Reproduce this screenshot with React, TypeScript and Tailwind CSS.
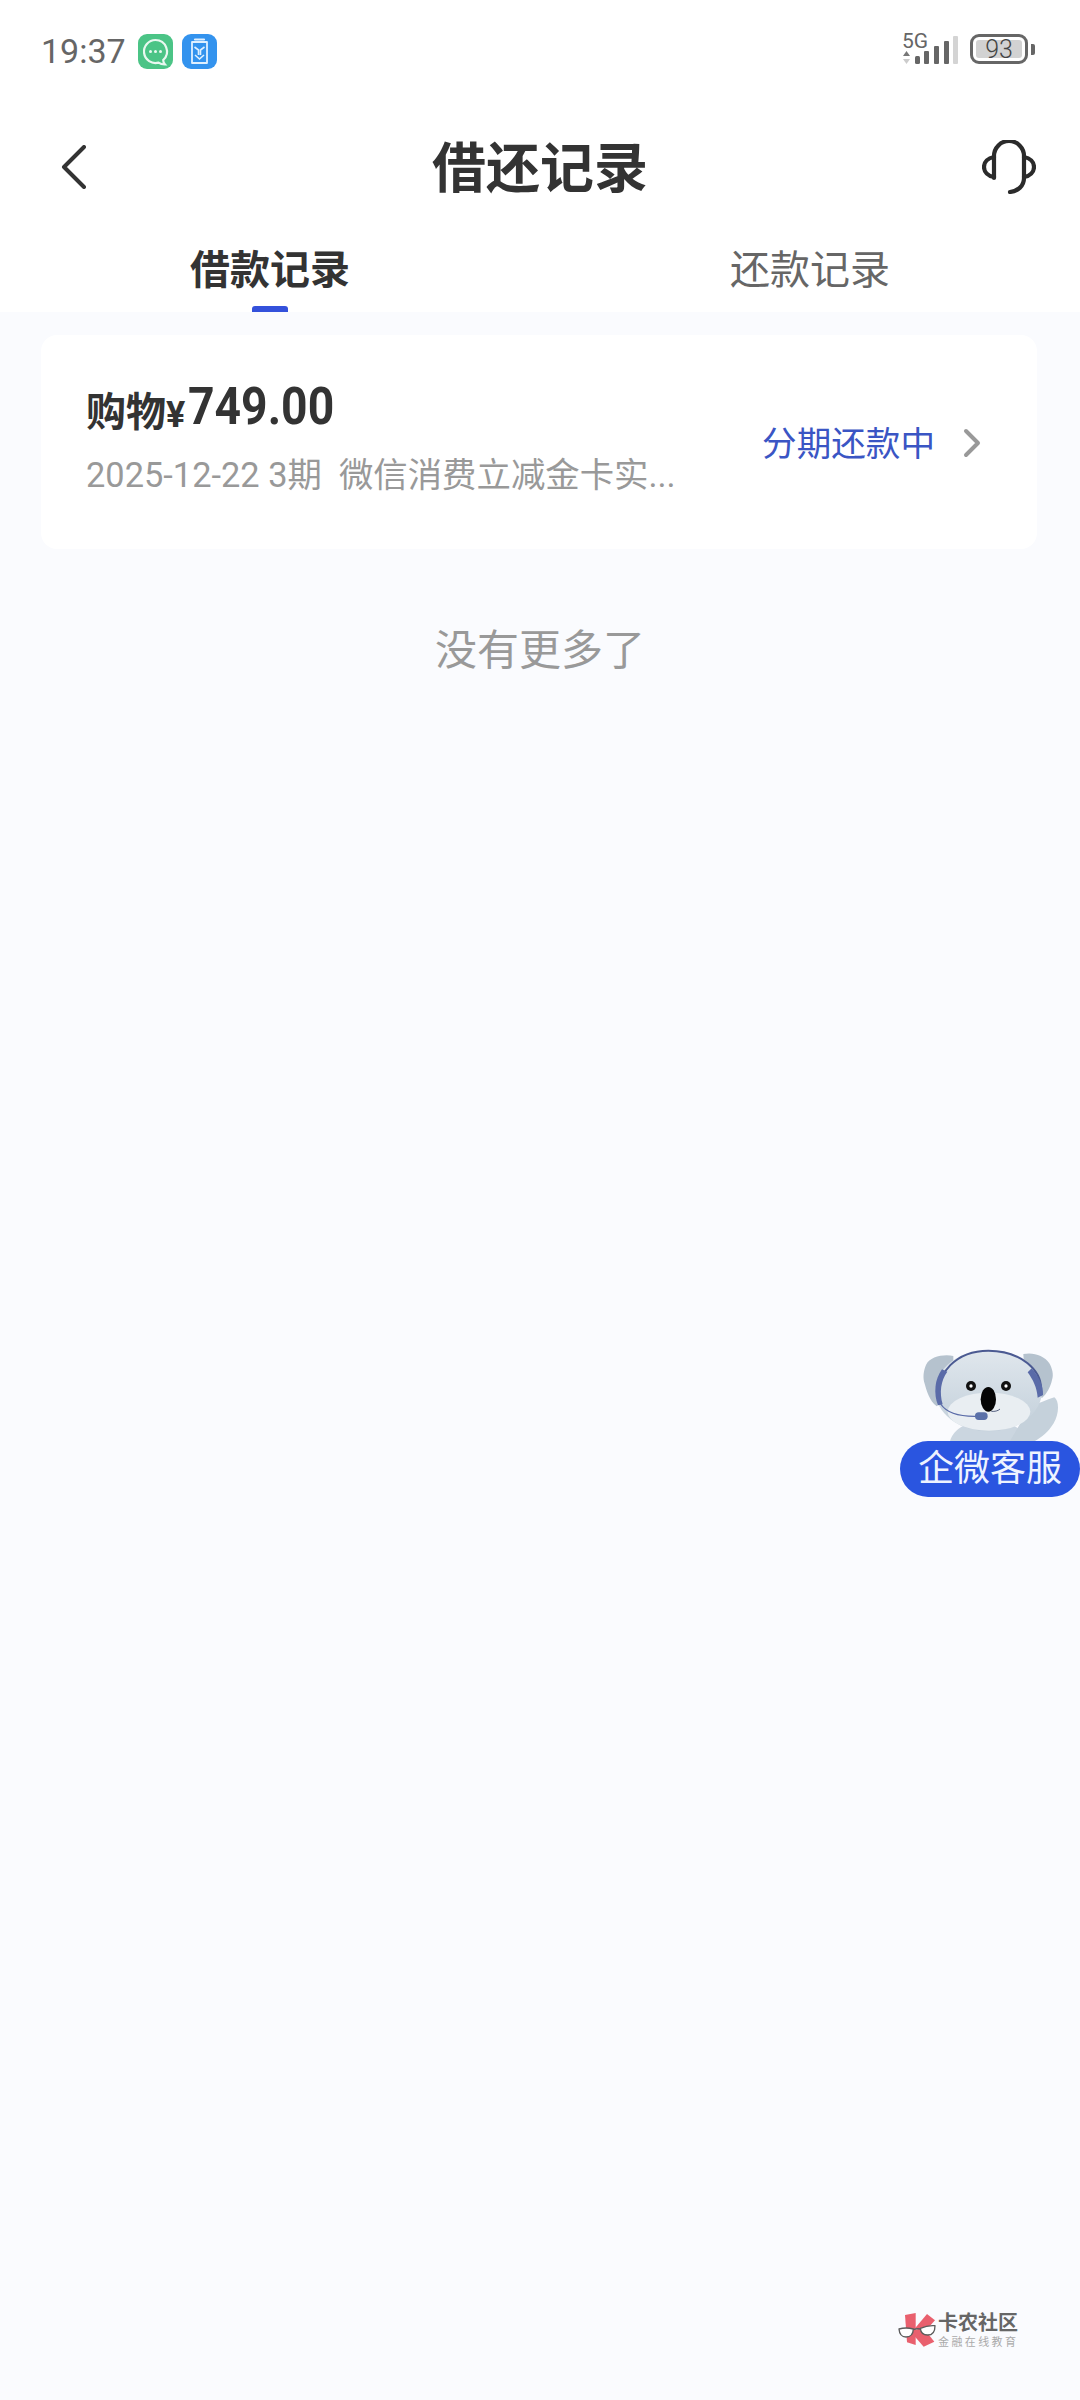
const CJK = "font-['Roboto','Noto_Sans_CJK_SC',sans-serif]";

function ChatBadge() {
  return (
    <svg width="35" height="35" viewBox="0 0 35 35">
      <rect width="35" height="35" rx="9" fill="#4bc486" />
      <path d="M17.500 6a11.500 11.500 0 1 0 3 22.600c2 1.400 4 2 6.500 1.900-1.200-1.300-1.800-2.600-1.800-4.500A11.500 11.500 0 0 0 17.500 6Z" fill="none" stroke="#e9f8f0" strokeWidth="2.200" />
      <circle cx="12.500" cy="17.500" r="1.500" fill="#e9f8f0" />
      <circle cx="17.500" cy="17.500" r="1.500" fill="#e9f8f0" />
      <circle cx="22.500" cy="17.500" r="1.500" fill="#e9f8f0" />
    </svg>
  );
}

function ClipBadge() {
  return (
    <svg width="35" height="35" viewBox="0 0 35 35">
      <rect width="35" height="35" rx="9" fill="#3393ee" />
      <path d="M10 8h15v21H10Z" fill="none" stroke="#dff0ff" strokeWidth="1.800" strokeLinejoin="round" />
      <path d="M13 5.500h9" stroke="#dff0ff" strokeWidth="2.200" strokeLinecap="round" />
      <path d="M12.500 13l4 3v5M22.500 13l-4 3v5M13 21l4.500 4 4.500-4" fill="none" stroke="#dff0ff" strokeWidth="1.600" />
    </svg>
  );
}

function Signal() {
  return (
    <div className="flex items-end">
      {/* 5G label sits over the short bars, so the column is narrower than its text */}
      <div className="flex w-[13px] flex-col items-start">
        <span className="font-['Roboto',sans-serif] text-[21px] leading-[17px] text-[#666666]">5G</span>
        <svg width="7" height="13" viewBox="0 0 7 13" className="ml-[1px] mt-[1px]">
          <path d="M3.500 0l3.500 5H0Z" fill="#777777" />
          <path d="M3.500 13l3.500-5H0Z" fill="#cccccc" />
        </svg>
      </div>
      <svg width="43" height="28" viewBox="0 0 43 28">
        <rect x="0" y="20" width="5" height="8" rx="1.500" fill="#666666" />
        <rect x="9" y="15" width="5" height="13" rx="1" fill="#666666" />
        <rect x="19" y="10" width="5" height="18" rx="1" fill="#666666" />
        <rect x="29" y="5" width="5" height="23" rx="1" fill="#666666" />
        <rect x="38" y="0" width="5" height="28" rx="1" fill="#d4d4d4" />
      </svg>
    </div>
  );
}

function Battery() {
  return (
    <div className="flex items-center gap-[3px]">
      <div className="flex h-[30px] w-[58px] items-center rounded-[9px] border-[3px] border-[#666666] p-[3px]">
        <div className="flex h-full w-full items-center justify-center rounded-[3px] bg-[#d2d2d2] font-['Roboto',sans-serif] text-[25px] font-light leading-none text-[#444444]">
          93
        </div>
      </div>
      <div className="h-[11px] w-[4px] rounded-r-[2px] bg-[#666666]" />
    </div>
  );
}

function Headset() {
  return (
    <svg width="54" height="54" viewBox="0 0 54 54" fill="none" stroke="#2b2b2b" strokeWidth="4.200" strokeLinecap="round" strokeLinejoin="round">
      <path d="M12 38V16a15 15 0 0 1 30 0v22c0 8-6 13-14 14" />
      <path d="M12 17c-6 1-10 5-10 10s4 9 10 10" />
      <path d="M42 17c6 1 10 5 10 10s-4 9-10 10" />
    </svg>
  );
}

function Koala() {
  return (
    <svg width="150" height="101" viewBox="0 0 450 303" className="absolute left-[920px] top-[1340px]">
      <defs>
        <linearGradient id="koalaHead" x1="0" y1="0" x2="0" y2="1">
          <stop offset="0" stopColor="#e0e7ed" />
          <stop offset="1" stopColor="#c2cfda" />
        </linearGradient>
      </defs>
      <path d="M90 303c12-40 55-60 115-60s105 20 120 60Z" fill="#cbd6e0" />
      <path d="M270 303 330 200c25-10 50-20 73-28 16 12 14 50-2 78-16 26-36 42-56 53Z" fill="#c5d1db" />
      <path d="M100 48C70 42 30 50 18 75c-8 18-10 40-4 56 6 22 14 50 36 68l50-40Z" fill="#b5c2ce" />
      <path d="M310 42c30-6 62 4 78 28 8 14 14 34 8 50-4 20-16 42-30 54l-50-40Z" fill="#b5c2ce" />
      <ellipse cx="206" cy="152" rx="160" ry="122" fill="url(#koalaHead)" />
      <ellipse cx="207" cy="215" rx="124" ry="57" fill="#e9eef2" />
      <path d="M58 190C40 95 115 32 205 32s172 55 156 135" fill="none" stroke="#4b5a92" strokeWidth="6" />
      <path d="M66 88C44 118 40 160 54 196l14-3c-10-36-6-70 14-98Z" fill="#5a6ba8" />
      <path d="M335 85c22 26 36 52 34 80l-16 8c-2-30-14-54-30-76Z" fill="#5a6ba8" />
      <path d="M62 192c20 30 60 38 108 37" fill="none" stroke="#5a6ba8" strokeWidth="4" />
      <rect x="165" y="217" width="38" height="23" rx="11" fill="#5a70a8" />
      <path d="M214 214c10 1 20-1 26-7" fill="none" stroke="#39446a" strokeWidth="2.500" />
      <circle cx="153" cy="138" r="15" fill="#111111" />
      <circle cx="153" cy="138" r="5" fill="#ffffff" />
      <circle cx="258" cy="138" r="15" fill="#111111" />
      <circle cx="258" cy="138" r="5" fill="#ffffff" />
      <ellipse cx="205" cy="178" rx="23" ry="37" fill="#050505" />
    </svg>
  );
}

function Watermark() {
  return (
    <div className="absolute left-[895px] top-[2305px] flex items-center gap-[1px]">
      <svg width="42" height="50" viewBox="0 0 126 150">
        <path d="M30 30 62 24V120L36 112Z" fill="#e9606e" />
        <path d="M60 70 96 27l24 19-35 39Z" fill="#e9606e" />
        <path d="M60 75h30l28 35-32 15-26-30Z" fill="#e9606e" />
        <g fill="#ffffff" stroke="#5c5c5c" strokeWidth="4" strokeLinejoin="round">
          <path d="M12 72q21-6 43 0-1 24-22 24-19 0-21-24Z" />
          <path d="M76 70q22-10 44-8 0 28-22 28-20 0-22-20Z" />
        </g>
        <path d="M55 74q10-4 21-2" fill="none" stroke="#5c5c5c" strokeWidth="4" />
      </svg>
      <div className="flex flex-col">
        <span className="whitespace-nowrap font-['Noto_Sans_CJK_SC',sans-serif] text-[20px] font-bold leading-[22px] text-[#666666]">卡农社区</span>
        <span className="whitespace-nowrap font-['Noto_Sans_CJK_SC',sans-serif] text-[11px] leading-[16px] tracking-[2.400px] text-[#aaaaaa]">金融在线教育</span>
      </div>
    </div>
  );
}

export default function App() {
  return (
    <div className={`relative h-[2400px] w-[1080px] overflow-hidden bg-[#fafbfe] ${CJK}`}>
      <div className="bg-white">
        <div className="flex h-[102px] items-center justify-between pl-[41px] pr-[45px]">
          <div className="flex items-center">
            <span className="w-[97px] text-[34px] leading-none text-[#666666]">19:37</span>
            <span className="flex gap-[9px]">
              <ChatBadge />
              <ClipBadge />
            </span>
          </div>
          <div className="mb-[5px] flex items-end gap-[12px]">
            <Signal />
            <Battery />
          </div>
        </div>

        <div className="grid h-[130px] grid-cols-[1fr_auto_1fr] items-center px-[44px]">
          <svg width="26" height="44" viewBox="0 0 26 44" fill="none" stroke="#333333" strokeWidth="4" strokeLinecap="round" strokeLinejoin="round" className="ml-[17px]">
            <path d="M23 2 3 22l20 20" />
          </svg>
          <h1 className="pt-[5px] text-[54px] font-bold leading-none text-[#333333]">借还记录</h1>
          <div className="flex justify-end">
            <Headset />
          </div>
        </div>

        <div className="flex h-[80px]">
          <div className="relative flex flex-1 justify-center pt-[15px]">
            <span className="text-[40px] font-bold leading-[48px] text-[#333333]">借款记录</span>
            <span className="absolute bottom-0 h-[6px] w-[36px] rounded-t-[3px] bg-[#3451db]" />
          </div>
          <div className="flex flex-1 justify-center pt-[15px]">
            <span className="text-[40px] leading-[48px] text-[#666666]">还款记录</span>
          </div>
        </div>
      </div>

      <div className="ml-[41px] mr-[43px] mt-[23px] flex h-[214px] items-center justify-between rounded-[16px] bg-white pl-[45px] pr-[56px]">
        <div className="mb-[6px]">
          <div className="flex items-end whitespace-nowrap font-bold leading-none text-[#333333]">
            <span className="text-[40px]">购物</span>
            <span className="text-[36px]">¥</span>
            <span className="ml-[3px] inline-block origin-left scale-x-[0.89] text-[52px]">749.00</span>
          </div>
          <p className="mt-[20px] whitespace-nowrap text-[34.400px] leading-[44px] text-[#999999]">
            2025-12-22 3期&nbsp;&nbsp;微信消费立减金卡实...
          </p>
        </div>
        <div className="mt-[5px] flex items-center gap-[28px]">
          <span className="whitespace-nowrap text-[34.600px] leading-none text-[#3a55c4]">分期还款中</span>
          <svg width="18" height="30" viewBox="0 0 18 30" fill="none" stroke="#999999" strokeWidth="4" strokeLinecap="round" strokeLinejoin="round" className="mb-[3px]">
            <path d="M3 3l12 12L3 27" />
          </svg>
        </div>
      </div>

      <p className="mt-[76px] text-center text-[42px] leading-[52px] text-[#999999]">没有更多了</p>

      <Koala />
      <div className="absolute left-[900px] top-[1441px] flex h-[56px] w-[180px] items-center justify-center rounded-[28px] bg-[#2a55e0] text-[36px] leading-none text-[#eef3ff]">
        企微客服
      </div>
      <Watermark />
    </div>
  );
}
